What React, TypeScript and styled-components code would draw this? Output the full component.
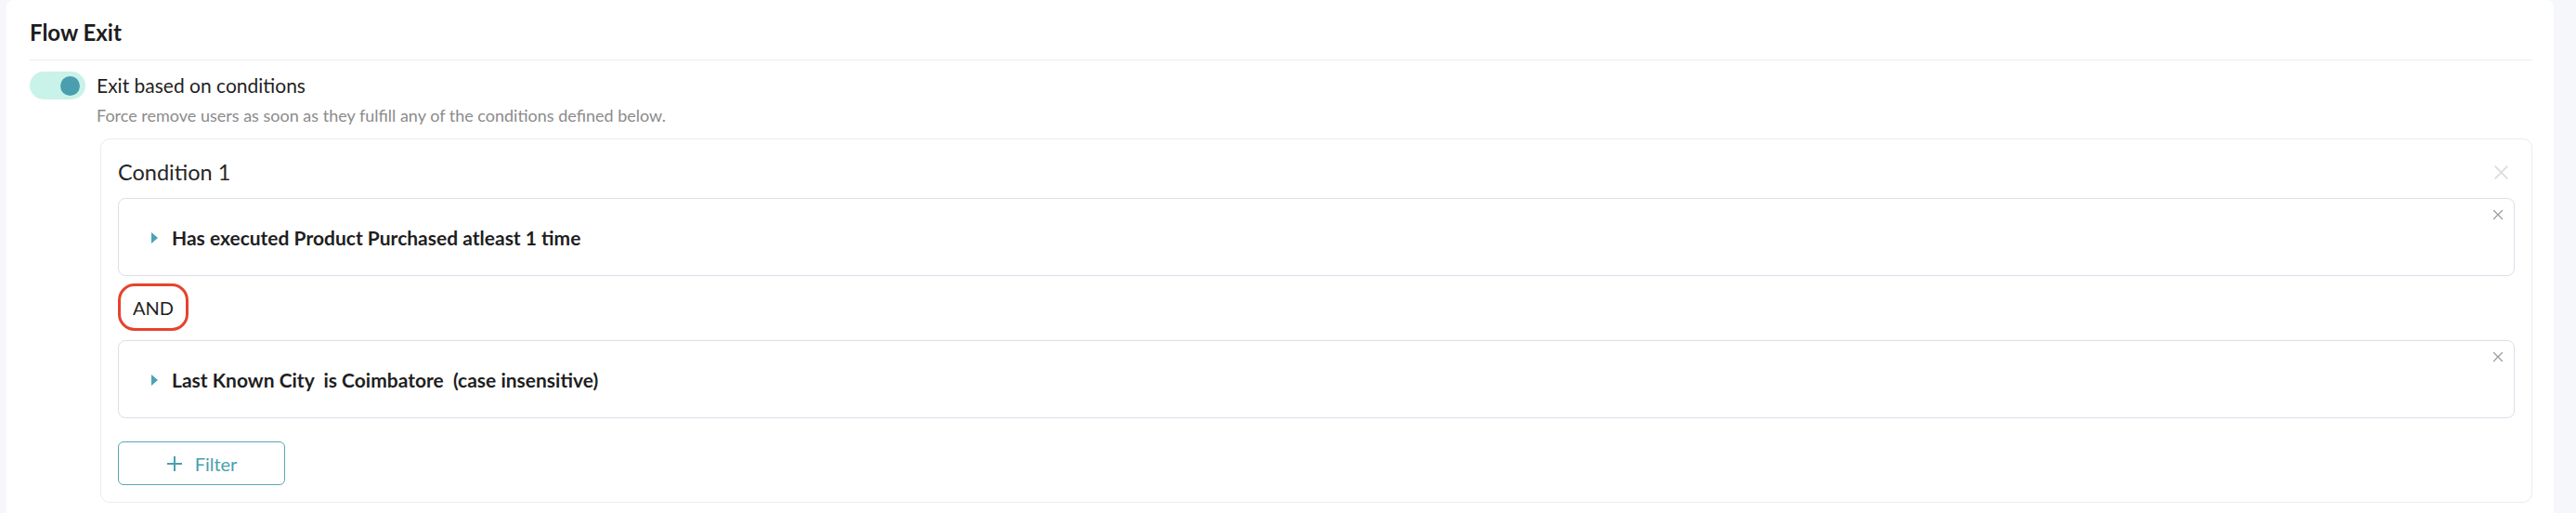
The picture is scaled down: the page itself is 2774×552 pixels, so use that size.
import React, { useState } from "react";
import styled, { createGlobalStyle } from "styled-components";

interface FilterItem {
  text: string;
}

const GlobalStyle = createGlobalStyle`
  html, body {
    margin: 0;
    padding: 0;
    background: #f6f7fb;
    font-family: Lato, "Open Sans", Arial, sans-serif;
    color: #1f1f1f;
  }
`;

const Page = styled.div`
  padding: 0 24px 0 7px;
  height: 552px;
  overflow: hidden;
`;

const Card = styled.section`
  background: #fff;
  border-radius: 8px;
  padding: 0 23px 40px 25px;
  min-height: 600px;
`;

const Header = styled.div`
  padding: 20px 0 14px;
  border-bottom: 1px solid #ececec;
`;

const Title = styled.h2`
  margin: 0;
  font-size: 24px;
  line-height: 30px;
  font-weight: 700;
  color: #1c1c1c;
`;

const ToggleRow = styled.div`
  display: flex;
  align-items: flex-start;
  gap: 12px;
  margin-top: 12px;
`;

const Track = styled.button<{ $on: boolean }>`
  width: 60px;
  height: 30px;
  flex-shrink: 0;
  border: none;
  border-radius: 15px;
  padding: 0 6px;
  display: flex;
  align-items: center;
  justify-content: ${(p) => (p.$on ? "flex-end" : "flex-start")};
  background: ${(p) => (p.$on ? "#c9f2e8" : "#e4e4e4")};
  cursor: pointer;
`;

const Knob = styled.span`
  width: 21px;
  height: 21px;
  border-radius: 50%;
  background: #4a9fae;
`;

const ToggleLabel = styled.div`
  font-size: 21px;
  line-height: 30px;
  color: #1f1f1f;
`;

const Description = styled.p`
  margin: 5px 0 0 72px;
  font-size: 18px;
  line-height: 24px;
  color: #8b8b8b;
`;

const ConditionCard = styled.div`
  margin: 13px 0 0 76px;
  border: 1px solid #ececf0;
  border-radius: 10px;
  padding: 20px 18px 18px;
  position: relative;
`;

const ConditionTitle = styled.div`
  font-size: 23.5px;
  line-height: 30px;
  color: #262626;
`;

const CloseButton = styled.button<{ $size: number; $color: string }>`
  position: absolute;
  border: none;
  background: transparent;
  padding: 0;
  cursor: pointer;
  width: ${(p) => p.$size}px;
  height: ${(p) => p.$size}px;
  color: ${(p) => p.$color};
  display: flex;

  svg {
    width: 100%;
    height: 100%;
  }
`;

const ConditionClose = styled(CloseButton)`
  top: 27px;
  right: 24px;
`;

const FilterBox = styled.div`
  position: relative;
  margin-top: 13px;
  border: 1px solid #dcdfea;
  border-radius: 8px;
  padding: 30px 18px 28px 35px;
  display: flex;
  align-items: center;
  gap: 15px;
`;

const FilterClose = styled(CloseButton)`
  top: 11px;
  right: 11px;
`;

const Caret = styled.span`
  width: 0;
  height: 0;
  border-top: 6px solid transparent;
  border-bottom: 6px solid transparent;
  border-left: 7px solid #4aa3b3;
`;

const FilterText = styled.span`
  font-size: 21px;
  line-height: 24px;
  font-weight: 700;
  color: #1f1f1f;
  white-space: pre;
`;

const AndChip = styled.div`
  display: inline-flex;
  align-items: center;
  height: 45px;
  margin: 8px 0 -3px;
  padding: 0 13px;
  border: 3px solid #e6432c;
  border-radius: 18px;
  font-size: 20px;
  color: #1f1f1f;
`;

const AddButton = styled.button`
  margin-top: 25px;
  width: 180px;
  height: 47px;
  border: 1px solid #5aa6b5;
  border-radius: 6px;
  background: #fff;
  display: flex;
  align-items: center;
  justify-content: center;
  gap: 13px;
  font-family: inherit;
  font-size: 20px;
  color: #4a9fb0;
  cursor: pointer;
`;

const CrossIcon = () => (
  <svg viewBox="0 0 16 16" fill="none" stroke="currentColor" strokeWidth="1.6" strokeLinecap="round">
    <path d="M2 2l12 12M14 2L2 14" />
  </svg>
);

const PlusIcon = () => (
  <svg width="18" height="18" viewBox="0 0 18 18" fill="none" stroke="currentColor" strokeWidth="2">
    <path d="M9 1v16M1 9h16" />
  </svg>
);

const App: React.FC = () => {
  const [enabled, setEnabled] = useState(true);

  const filters: FilterItem[] = [
    { text: "Has executed Product Purchased atleast 1 time" },
    { text: "Last Known City  is Coimbatore  (case insensitive)" },
  ];

  return (
    <Page>
      <GlobalStyle />
      <Card>
        <Header>
          <Title>Flow Exit</Title>
        </Header>
        <ToggleRow>
          <Track $on={enabled} onClick={() => setEnabled(!enabled)}>
            <Knob />
          </Track>
          <ToggleLabel>Exit based on conditions</ToggleLabel>
        </ToggleRow>
        <Description>
          Force remove users as soon as they fulfill any of the conditions defined below.
        </Description>
        <ConditionCard>
          <ConditionTitle>Condition 1</ConditionTitle>
          <ConditionClose $size={17} $color="#dcdcdc">
            <CrossIcon />
          </ConditionClose>
          {filters.map((f, i) => (
            <React.Fragment key={i}>
              {i > 0 && <AndChip>AND</AndChip>}
              <FilterBox>
                <Caret />
                <FilterText>{f.text}</FilterText>
                <FilterClose $size={12} $color="#9a9a9a">
                  <CrossIcon />
                </FilterClose>
              </FilterBox>
            </React.Fragment>
          ))}
          <AddButton>
            <PlusIcon />
            Filter
          </AddButton>
        </ConditionCard>
      </Card>
    </Page>
  );
};

export default App;
